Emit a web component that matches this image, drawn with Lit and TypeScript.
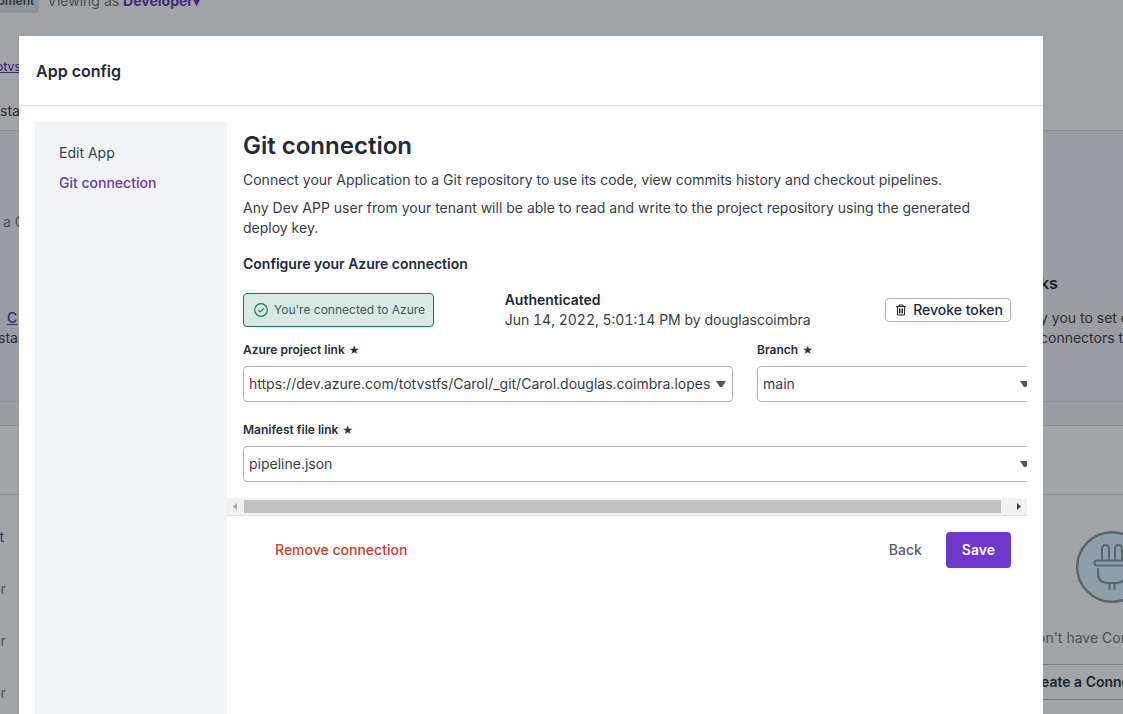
import { LitElement, html, css, svg } from "lit";
import { customElement, property } from "lit/decorators.js";

const plugIcon = svg`
  <svg class="plug" viewBox="0 0 72 72" width="72" height="72" aria-hidden="true">
    <circle cx="36" cy="36" r="34.8" fill="#8f9fa8" stroke="#5b666a" stroke-width="2.4"/>
    <g fill="none" stroke="#5b666a" stroke-width="2" stroke-linecap="round" stroke-linejoin="round">
      <path d="M26 29V17.500a3.500 3.500 0 0 1 7 0V29M39 29V17.500a3.500 3.500 0 0 1 7 0V29"/>
      <rect x="18.500" y="29.500" width="35" height="5" rx="2.500"/>
      <path d="M22 38v4.500q0 9.500 10 9.500h8q10 0 10-9.500V38M33.500 53v5M38.500 53v5"/>
    </g>
  </svg>`;

@customElement("page-backdrop")
export class PageBackdrop extends LitElement {
  static styles = css`
    :host {
      display: block;
      min-height: 100vh;
      font: 400 14px/20px Inter, sans-serif;
      color: #4a4f57;
      background: #a1a5a7;
      white-space: nowrap;
    }
    .band {
      display: flex;
      justify-content: space-between;
      box-sizing: border-box;
      border-bottom: 1px solid #8d9194;
      overflow: hidden;
    }
    .top { height: 131px; background: #a0a4a7; }
    .cards { height: 295px; background: #9a9da1; }
    .title { height: 69px; }
    .rest { border: 0; height: 219px; }
    .view { display: flex; gap: 8px; margin-top: -9px; height: 22px; }
    .chip {
      padding: 0 5px 0 0;
      margin-left: -10px;
      font-weight: 600;
      font-size: 12px;
      border-radius: 3px;
      background: #8f9499;
      color: #30363e;
    }
    a { color: #402a78; }
    .role { font-weight: 700; text-decoration: none; }
    .small { display: block; margin: 44px 0 24px -4px; font-size: 12px; font-weight: 500; }
    .left { flex: none; width: 240px; }
    .right { flex: none; width: 83px; overflow: hidden; }
    p, h2 { margin: 0; }
    .note { padding: 81px 0 76px 3px; }
    .link { display: block; margin-left: 7px; font-weight: 500; }
    .tight { margin-left: -2px; }
    .dark { color: #292f38; }
    .cards .left, .cards .right { height: 270px; border-bottom: 1px solid #8d9194; }
    h2 { padding: 142px 0 15px; color: #1b2028; font-size: 16px; line-height: 20px; font-weight: 600; }
    .rows { padding-top: 32px; display: grid; gap: 32px; align-content: start; }
    .rows p { margin-left: -8px; }
    .blue { color: #303768; }
    .empty { padding-top: 36px; }
    .plug { display: block; margin-left: 36px; }
    .empty p { margin: 25px 0 16px -3px; }
    .create {
      display: block;
      height: 36px;
      width: 160px;
      padding: 0;
      text-align: left;
      border: 1px solid #777d81;
      background: none;
      color: #1f252d;
      font: 600 14px/20px Inter, sans-serif;
    }
  `;
  render() {
    return html`
      <div class="band top">
        <div class="left">
          <div class="view"><span class="chip">opment</span><span>Viewing as <a class="role" href="#">Developer▾</a></span></div>
          <a class="small" href="#">otvs</a>
          <p class="dark">sta</p>
        </div>
      </div>
      <div class="band cards">
        <div class="left">
          <p class="note">a C</p>
          <a class="link" href="#">C</a>
          <p class="dark tight">star</p>
        </div>
        <div class="right">
          <h2>ks</h2>
          <p class="dark">y you to set e</p>
          <p class="dark">connectors t</p>
        </div>
      </div>
      <div class="band title"></div>
      <div class="band rest">
        <div class="left rows"><p class="blue">st</p><p>or</p><p>or</p><p>or</p></div>
        <div class="right empty">
          ${plugIcon}
          <p>on't have Con</p>
          <button class="create" type="button">eate a Conne</button>
        </div>
      </div>`;
  }
}

@customElement("select-field")
export class SelectField extends LitElement {
  @property() label = "";
  @property() value = "";
  static styles = css`
    :host { display: block; min-width: 0; }
    label { display: flex; gap: 4px; margin-bottom: 8px; font-size: 12px; line-height: 16px; font-weight: 600; color: #272f3a; }
    .star { font: 12px/16px "DejaVu Sans", sans-serif; }
    .box { display: grid; align-items: center; }
    select {
      grid-area: 1 / 1;
      appearance: none;
      width: 100%;
      height: 36px;
      padding: 0 20px 0 5px;
      border: 1px solid #b4b6b9;
      border-radius: 4px;
      background: #fff;
      color: #363e49;
      font: 400 14px/20px Inter, sans-serif;
    }
    svg { grid-area: 1 / 1; justify-self: end; margin-right: 7px; pointer-events: none; }
  `;
  render() {
    return html`
      <label for="field">${this.label}<span class="star">★</span></label>
      <div class="box">
        <select id="field"><option>${this.value}</option></select>
        <svg width="10" height="6" viewBox="0 0 10 6" aria-hidden="true"><path d="M0 0h10L6 6H4z" fill="#555"/></svg>
      </div>`;
  }
}

@customElement("app-root")
export class AppRoot extends LitElement {
  static styles = css`
    :host {
      display: block;
      position: relative;
      height: 100vh;
      overflow: hidden;
      font: 400 14px/20px Inter, sans-serif;
      color: #363e49;
    }
    .overlay {
      position: absolute;
      inset: 0;
      display: flex;
      padding: 36px 80px 0 19px;
    }
    .modal { flex: 1; min-width: 0; display: flex; flex-direction: column; background: #fff; }
    header { padding: 23px 17px 22px; border-bottom: 1px solid #e3e5e8; }
    header h1 { margin: 0; font-size: 16px; line-height: 24px; font-weight: 600; color: #222a35; }
    .body { flex: 1; display: flex; padding: 16px 16px 0; min-height: 0; }
    nav { flex: none; width: 192px; box-sizing: border-box; padding: 16px 24px; background: #f3f4f6; }
    nav a { display: block; line-height: 30px; color: #363e49; text-decoration: none; }
    nav a.active { color: #673ab7; font-weight: 500; }
    main { flex: 1; min-width: 0; }
    .scroller { padding: 8px 16px 16px; overflow: hidden; }
    h2 { margin: 0 0 8px; font-size: 24px; line-height: 32px; font-weight: 600; color: #222a35; }
    p { margin: 0 0 8px; }
    h3 { margin: 16px 0; font-size: 14px; line-height: 20px; font-weight: 600; color: #222a35; }
    .status {
      display: grid;
      grid-template-columns: minmax(0, 2fr) minmax(0, 3fr) auto;
      column-gap: 24px;
      align-items: center;
      margin-bottom: 12px;
    }
    .badge {
      justify-self: start;
      display: flex;
      align-items: center;
      gap: 6px;
      box-sizing: border-box;
      height: 34px;
      padding: 0 8px 0 10px;
      border: 1px solid #107c5c;
      border-radius: 4px;
      background: #d9eae4;
      font-size: 12px;
      color: #4a5560;
      white-space: nowrap;
    }
    .auth { font-variant-numeric: tabular-nums; }
    .auth strong { display: block; font-weight: 600; color: #222a35; }
    button { font: 500 14px/20px Inter, sans-serif; border: 0; background: none; padding: 0; border-radius: 4px; cursor: pointer; }
    .revoke {
      display: flex;
      align-items: center;
      gap: 6px;
      height: 24px;
      padding: 0 7px 0 9px;
      border: 1px solid #b4b6b9;
      color: #222a35;
    }
    .fields { display: grid; grid-template-columns: minmax(0, 1fr) 280px; gap: 20px 24px; margin-right: -26px; }
    .wide { grid-column: 1 / -1; }
    .track { display: flex; align-items: center; height: 17px; background: #f1f1f1; border-bottom: 1px solid #e0e0e0; }
    .arrow { flex: none; width: 17px; height: 17px; }
    .thumb { flex: 1; height: 13px; margin-right: 9px; background: #c1c1c1; }
    footer { display: flex; align-items: center; gap: 24px; padding: 16px; }
    .remove { margin: 0 auto 0 32px; color: #c9402d; }
    .back { color: #555d66; }
    .save { height: 36px; padding: 0 16px; background: #6c37cb; color: #fff; font-weight: 600; }
  `;
  render() {
    return html`
      <page-backdrop></page-backdrop>
      <div class="overlay">
        <div class="modal" role="dialog" aria-labelledby="title">
          <header><h1 id="title">App config</h1></header>
          <div class="body">
            <nav>
              <a href="#edit">Edit App</a>
              <a class="active" href="#git">Git connection</a>
            </nav>
            <main>
              <div class="scroller">
                <h2>Git connection</h2>
                <p>Connect your Application to a Git repository to use its code, view commits history and checkout pipelines.</p>
                <p>Any Dev APP user from your tenant will be able to read and write to the project repository using the generated deploy key.</p>
                <h3>Configure your Azure connection</h3>
                <div class="status">
                  <div class="badge">
                    <svg width="14" height="14" viewBox="0 0 14 14" fill="none" stroke="#16805f" stroke-width="1.2" aria-hidden="true">
                      <circle cx="7" cy="7" r="6.300"/><path d="M4.200 7.200l1.900 1.800 3.700-3.700"/>
                    </svg>
                    <span>You're connected to Azure</span>
                  </div>
                  <div class="auth"><strong>Authenticated</strong>Jun 14, 2022, 5:01:14 PM by douglascoimbra</div>
                  <button class="revoke" type="button">
                    <svg width="12" height="12" viewBox="0 0 12 12" fill="none" stroke="#222a35" aria-hidden="true">
                      <path d="M1 2.500h10M4 2V1h4v1M2.500 3v8h7V3M4.500 4.500v5M6 4.500v5M7.500 4.500v5"/>
                    </svg>
                    Revoke token
                  </button>
                </div>
                <div class="fields">
                  <select-field label="Azure project link" value="https://dev.azure.com/totvstfs/Carol/_git/Carol.douglas.coimbra.lopes"></select-field>
                  <select-field label="Branch" value="main"></select-field>
                  <select-field class="wide" label="Manifest file link" value="pipeline.json"></select-field>
                </div>
              </div>
              <div class="track" aria-hidden="true">
                <svg class="arrow" viewBox="0 0 17 17"><path d="M10 5v7L6 8.500z" fill="#a3a3a3"/></svg>
                <div class="thumb"></div>
                <svg class="arrow" viewBox="0 0 17 17"><path d="M7 5v7l4-3.500z" fill="#444"/></svg>
              </div>
              <footer>
                <button class="remove" type="button">Remove connection</button>
                <button class="back" type="button">Back</button>
                <button class="save" type="button">Save</button>
              </footer>
            </main>
          </div>
        </div>
      </div>`;
  }
}
